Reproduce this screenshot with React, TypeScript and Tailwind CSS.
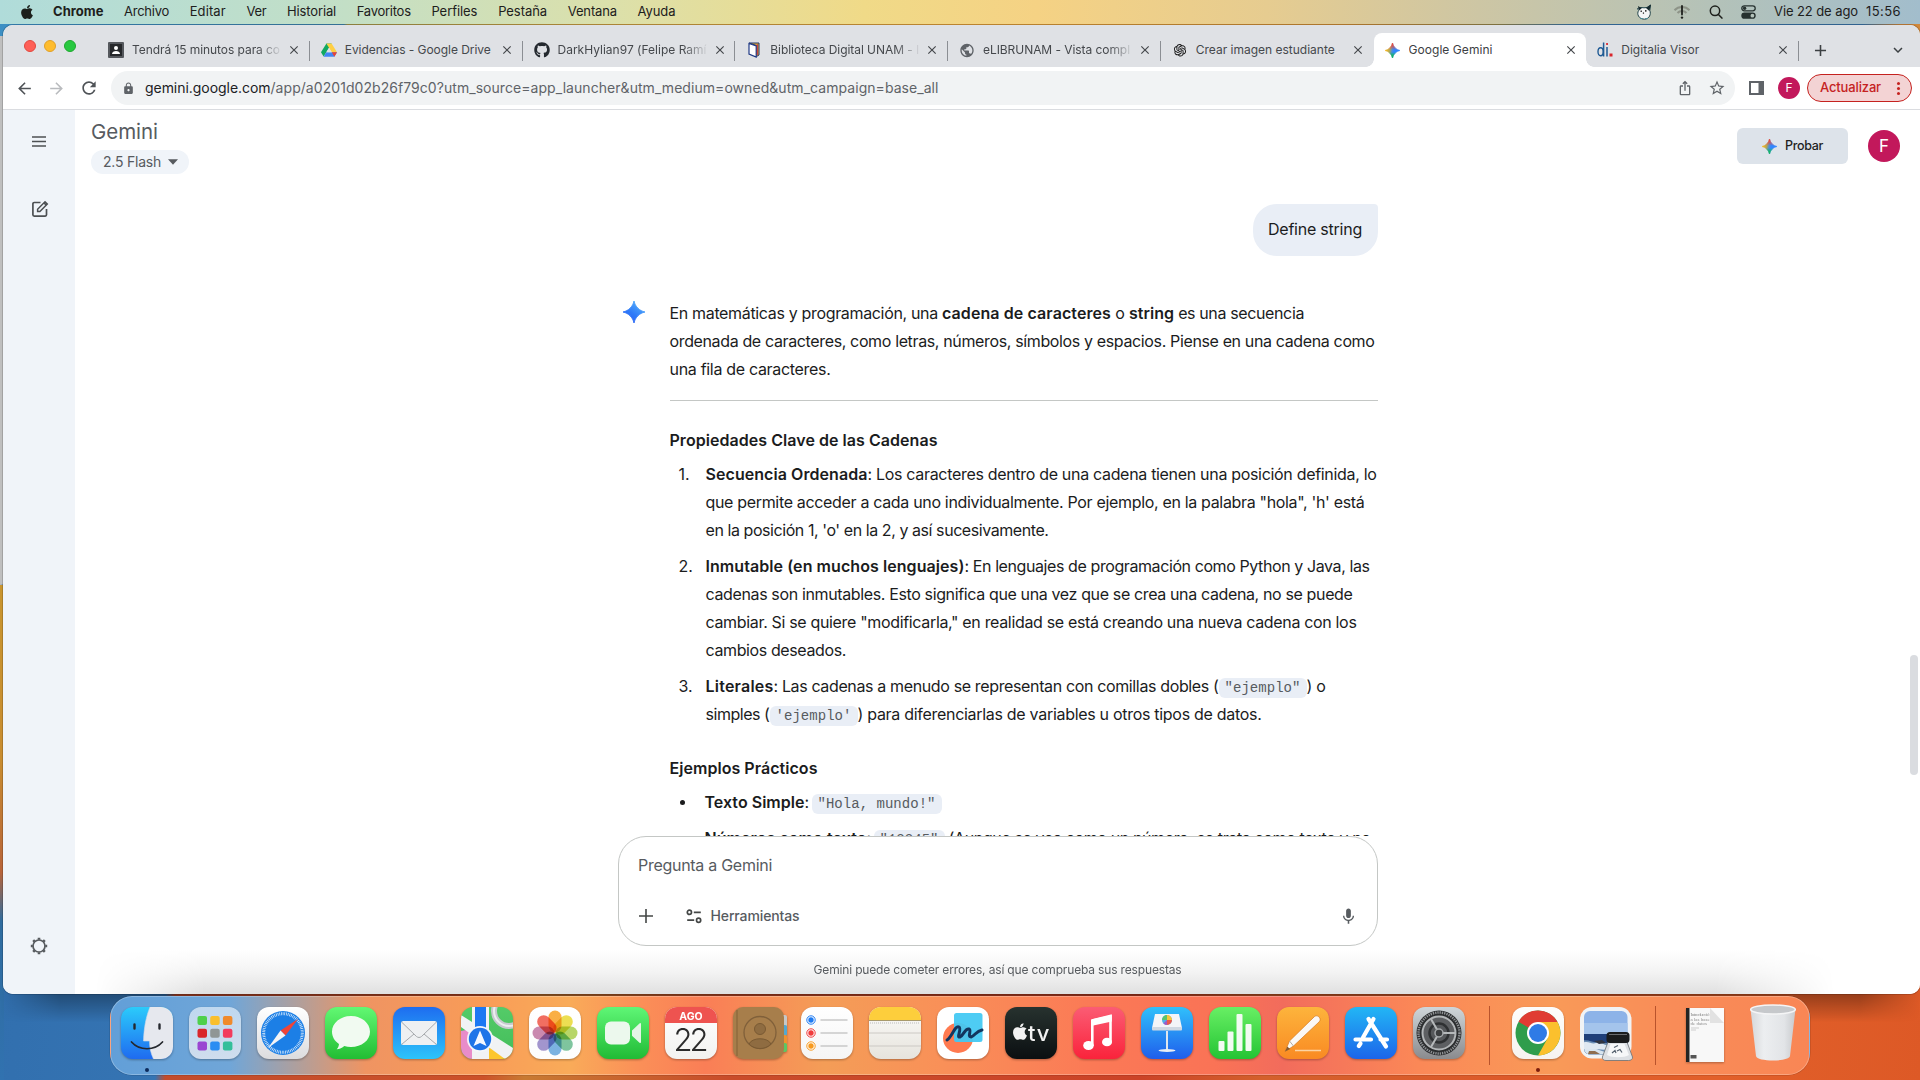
import React, { useLayoutEffect, useRef, useState } from "react";
import { FaApple, FaGithub } from "react-icons/fa";
import { AiOutlineOpenAI } from "react-icons/ai";
import {
  MdAdd, MdArrowBack, MdArrowForward, MdClose, MdIosShare, MdKeyboardArrowDown,
  MdLock, MdMic, MdPublic, MdRefresh, MdStarBorder,
} from "react-icons/md";

const UI = "font-['Inter',sans-serif]";

/** Single-line text whose tracking is tuned so that it fills `w` pixels. */
function Fit({ w, className = "", children }: { w: number; className?: string; children: string }) {
  const ref = useRef<HTMLSpanElement>(null);
  const [ls, setLs] = useState(0);
  useLayoutEffect(() => {
    const el = ref.current;
    if (!el) return;
    const natural = el.getBoundingClientRect().width;
    setLs((w - natural) / children.length);
  }, []);
  return (
    <span className={"block shrink-0 whitespace-pre " + className} style={{ width: w }}>
      <span ref={ref} className="inline-block" style={{ letterSpacing: ls }}>{children}</span>
    </span>
  );
}

function Spark({ size, blue = false }: { size: number; blue?: boolean }) {
  const d = "M12 0C13.2 6 18 10.8 24 12C18 13.2 13.2 18 12 24C10.8 18 6 13.2 0 12C6 10.8 10.8 6 12 0Z";
  const id = blue ? "sparkBlue" : "sparkMulti";
  return (
    <svg width={size} height={size} viewBox="0 0 24 24" className="shrink-0">
      <defs>
        <linearGradient id="sparkBlue" x1="0" y1="1" x2="0.7" y2="0">
          <stop offset="0" stopColor="#2a5bf5" /><stop offset="0.5" stopColor="#2f7bf8" /><stop offset="1" stopColor="#55b0fb" />
        </linearGradient>
        <linearGradient id="sparkMulti" x1="0" y1="0.4" x2="1" y2="0.6">
          <stop offset="0.05" stopColor="#f9b81c" /><stop offset="0.3" stopColor="#b9a94e" />
          <stop offset="0.47" stopColor="#4f8fd8" /><stop offset="0.6" stopColor="#3186ff" /><stop offset="1" stopColor="#3186ff" />
        </linearGradient>
        <linearGradient id="sparkRed" x1="0.5" y1="0" x2="0.5" y2="1">
          <stop offset="0.1" stopColor="#f04438" /><stop offset="0.45" stopColor="#f04438" stopOpacity="0" />
          <stop offset="0.6" stopColor="#14b85c" stopOpacity="0" /><stop offset="0.85" stopColor="#14b85c" />
        </linearGradient>
      </defs>
      <path d={d} fill={`url(#${id})`} stroke={`url(#${id})`} strokeWidth="1" />
      {!blue && <path d={d} fill="url(#sparkRed)" stroke="url(#sparkRed)" strokeWidth="1" />}
    </svg>
  );
}

/* ---------- menu bar ---------- */
const MENUS: [string, number][] = [
  ["Archivo", 45], ["Editar", 36], ["Ver", 20], ["Historial", 49], ["Favoritos", 54],
  ["Perfiles", 46], ["Pestaña", 49], ["Ventana", 49], ["Ayuda", 38],
];

function MenuBar() {
  return (
    <div className={"flex h-6 items-center bg-[linear-gradient(90deg,#b0dcda_0%,#c3dfc6_18%,#dce0aa_32%,#f0da88_45%,#f5d284_54%,#e6cc90_66%,#cdc6a4_77%,#b4c2b8_89%,#a2bdcc_100%)] pl-[19px] text-[13px] text-[#1d201c] " + UI}>
      <FaApple className="mr-[18px] -mt-px size-4" />
      <Fit w={50.5} className="font-bold">Chrome</Fit>
      <div className="flex gap-[20.7px] pl-[20.5px]">
        {MENUS.map(([t, w]) => <Fit key={t} w={w}>{t}</Fit>)}
      </div>
      <div className="ml-auto flex items-center">
        <svg width="16" height="16" viewBox="0 0 16 16" className="mr-[21px]">
          <path d="M1.5 4.5L5 3.5L8 3.8L11 3.5L14.5 1L13.8 6.5C15.3 10 13.5 15 8.5 15.2C2.5 15 .5 10 2.6 6.5Z" fill="#f4f6f5" stroke="#1f4248" strokeWidth="1" />
          <path d="M2 2L5.8 4.2L3 6.5ZM15 .5L10 4L13.3 7Z" fill="#172a2e" />
          <path d="M5.2 6.5v1.6M9.800 6v1.8M7 8.600l.8.9" stroke="#111" strokeWidth="1.2" />
          <path d="M4 14.6h3M9 14.6h3" stroke="#4e8f97" strokeWidth="1" />
        </svg>
        <svg width="18" height="16" viewBox="0 0 18 16" className="mr-[18px]">
          <path d="M1.5 6.2A10.5 10.5 0 0 1 16.5 6.2M4.5 9A6.3 6.3 0 0 1 13.5 9" fill="none" stroke="#8e9488" strokeWidth="2" />
          <path d="M9 2v8.5" stroke="#1d201c" strokeWidth="1.8" strokeLinecap="round" /><circle cx="9" cy="13.6" r="1.2" fill="#1d201c" />
        </svg>
        <svg width="14" height="14" viewBox="0 0 14 14" className="mr-[18px]" fill="none" stroke="#1d201c" strokeWidth="1.5" strokeLinecap="round">
          <circle cx="6" cy="5.8" r="4.7" /><path d="M9.4 9.4l3.5 3.7" />
        </svg>
        <svg width="15" height="14" viewBox="0 0 15 14" className="mr-[18px]">
          <rect x="0.8" y="0.8" width="13.4" height="5" rx="2.5" fill="none" stroke="#26312f" strokeWidth="1.3" /><circle cx="3.6" cy="3.3" r="1.7" fill="#26312f" />
          <rect x="0.3" y="7.6" width="14.4" height="6.2" rx="3.1" fill="#26312f" /><circle cx="11.4" cy="10.7" r="1.9" fill="#b3c2ba" />
        </svg>
        <Fit w={84}>Vie 22 de ago</Fit>
        <div className="w-2" />
        <Fit w={35}>15:56</Fit>
        <div className="w-[19px]" />
      </div>
    </div>
  );
}

/* ---------- tab strip ---------- */
const DriveIcon = () => (
  <svg width="16" height="16" viewBox="0 0 16 16">
    <path d="M5.4 1.5h5.2L5.2 10.6 2.6 14.6 0 10.3z" fill="#11a861" /><path d="M5.4 1.5h5.2L16 10.3h-5.2z" fill="#ffcf44" />
    <path d="M5.2 10.3H16l-2.6 4.4H2.6z" fill="#4285f4" /><path d="M10.8 10.3H16l-2.6 4.4z" fill="#ea4335" />
    <path d="M8 5.8l2.7 4.5H5.3z" fill="#dfe1e5" />
  </svg>
);
const SlideIcon = () => (
  <svg width="16" height="16" viewBox="0 0 16 16">
    <rect width="16" height="16" rx="1" fill="#55585d" /><rect x="2" y="2" width="12" height="12" fill="#26282b" />
    <circle cx="8" cy="6" r="2" fill="#fff" /><path d="M4 12c0-4 8-4 8 0z" fill="#fff" />
  </svg>
);
const BookIcon = () => (
  <svg width="12" height="16" viewBox="0 0 12 16">
    <path d="M1 1h10v12l-2.5 1.5V3.5z" fill="#e4b53c" stroke="#20356c" strokeWidth="1" /><path d="M8 3l2-1v10.5L8 14z" fill="#c8463a" />
    <path d="M1 1.5L8.2 4v11L1 12z" fill="#fff" stroke="#213a85" strokeWidth="1.2" />
  </svg>
);
const DiIcon = () => (
  <svg width="16" height="16" viewBox="0 0 16 16">
    <ellipse cx="3.600" cy="9.800" rx="2.600" ry="4" fill="none" stroke="#1f5a94" strokeWidth="1.4" />
    <path d="M6.600 .5v14" stroke="#1f5a94" strokeWidth="1.5" /><path d="M10 5v9.500" stroke="#1f5a94" strokeWidth="1.5" />
    <path d="M9.200 1h1.700v2H9.200z" fill="#d9252b" /><path d="M12.500 11.500h3v3h-3z" fill="#d9252b" />
  </svg>
);

type Tab = { t: string; w: number; icon: React.ReactNode; active?: boolean; fade?: boolean };
const TABS: Tab[] = [
  { t: "Tendrá 15 minutos para co", w: 148, icon: <SlideIcon />, fade: true },
  { t: "Evidencias - Google Drive", w: 146, icon: <DriveIcon /> },
  { t: "DarkHylian97 (Felipe Ramí", w: 149, icon: <FaGithub className="size-4 text-[#24292f]" />, fade: true },
  { t: "Biblioteca Digital UNAM - I", w: 149, icon: <BookIcon />, fade: true },
  { t: "eLIBRUNAM - Vista compl", w: 147, icon: <MdPublic className="size-[17px] text-[#5f6368]" />, fade: true },
  { t: "Crear imagen estudiante", w: 139, icon: <AiOutlineOpenAI className="size-4 text-[#1c1c1c]" /> },
  { t: "Google Gemini", w: 84, icon: <Spark size={15} />, active: true },
  { t: "Digitalia Visor", w: 78, icon: <DiIcon /> },
];

function TabStrip() {
  return (
    <div className={"flex h-[42px] bg-[#dfe1e5] text-[12px] text-[#45484c] " + UI}>
      <div className="flex w-[94px] shrink-0 gap-2 pt-[15px] pl-[21px]">
        <span className="size-3 rounded-full border border-[#e1483f] bg-[#fe5f57]" />
        <span className="size-3 rounded-full border border-[#e0a028] bg-[#febc2e]" />
        <span className="size-3 rounded-full border border-[#1fa82f] bg-[#28c840]" />
      </div>
      {TABS.map((tab, i) => (
        <div key={tab.t} className={"relative mt-2 flex h-[34px] w-[212.75px] shrink-0 items-center rounded-t-lg " + (tab.active ? "bg-white text-[#3c4043]" : "")}>
          {tab.active && (
            <>
              <span className="absolute bottom-0 -left-2 size-2 bg-[radial-gradient(circle_at_0_0,transparent_7.5px,white_8px)]" />
              <span className="absolute -right-2 bottom-0 size-2 bg-[radial-gradient(circle_at_100%_0,transparent_7.5px,white_8px)]" />
            </>
          )}
          <span className="flex w-[35px] shrink-0 justify-end pr-[8px]"><span className="flex w-4 justify-center">{tab.icon}</span></span>
          <span className="flex w-[149px] shrink-0 overflow-hidden">
            <span className={tab.fade ? "[mask-image:linear-gradient(90deg,black_125px,transparent_151px)]" : ""}><Fit w={tab.w}>{tab.t}</Fit></span>
          </span>
          <span className="flex w-[26px] shrink-0 justify-center"><MdClose className="size-[14px] text-[#45484c]" /></span>
          {i !== 5 && i !== 6 && <span className="absolute top-2 right-0 h-5 w-px bg-[#8b8e93]" />}
        </div>
      ))}
      <span className="flex w-[42px] items-center justify-center pt-2"><MdAdd className="size-[19px] text-[#3c4043]" /></span>
      <span className="mr-[13px] ml-auto flex items-center pt-2"><MdKeyboardArrowDown className="size-[18px] text-[#3c4043]" /></span>
    </div>
  );
}

function Toolbar() {
  return (
    <div className={"flex h-[43px] items-center border-b border-[#dadce0] bg-white text-[14px] " + UI}>
      <MdArrowBack className="ml-[12px] size-[19px] text-[#4f5357]" />
      <MdArrowForward className="ml-[13px] size-[19px] text-[#b9bbbe]" />
      <MdRefresh className="ml-[13px] size-[20px] text-[#4f5357]" />
      <div className="ml-[12px] flex h-[34px] w-[1624px] items-center rounded-full bg-[#f1f3f4] pl-[11px]">
        <MdLock className="mr-[10px] size-[13px] text-[#5f6368]" />
        <Fit w={125.5} className="-mt-px text-[#202124]">gemini.google.com</Fit>
        <Fit w={668} className="-mt-px text-[#5f6368]">/app/a0201d02b26f79c0?utm_source=app_launcher&utm_medium=owned&utm_campaign=base_all</Fit>
        <MdIosShare className="ml-auto size-[16px] text-[#5f6368]" />
        <MdStarBorder className="mr-[9px] ml-[15px] size-[18px] text-[#5f6368]" />
      </div>
      <svg width="15" height="14" viewBox="0 0 15 14" className="ml-[14px]"><path d="M0 0h15v14H0zM2 2v10h7.5V2z" fill="#5f6368" fillRule="evenodd" /></svg>
      <span className="ml-[14px] flex size-[22px] items-center justify-center rounded-full bg-[#c2185b] text-[12px] text-white">F</span>
      <div className="ml-[7px] flex h-7 w-[105px] items-center rounded-full border border-[#c5221f] bg-[#f3d3d4] pl-[12px] text-[13px] font-medium text-[#c5221f]">
        <Fit w={61}>Actualizar</Fit>
        <span className="ml-[16px] flex flex-col gap-[2px]">
          <i className="size-[3px] rounded-full bg-[#c5221f]" /><i className="size-[3px] rounded-full bg-[#c5221f]" /><i className="size-[3px] rounded-full bg-[#c5221f]" />
        </span>
      </div>
    </div>
  );
}

/* ---------- conversation ---------- */
type Seg = [kind: "n" | "b" | "c" | "g", text: string, w: number];

function Line({ segs }: { segs: Seg[] }) {
  return (
    <div className="flex h-7 items-center">
      {segs.map(([k, t, w], i) => {
        if (k === "g") return <span key={i} style={{ width: w }} />;
        if (k === "c")
          return (
            <span key={i} className="mt-1 flex h-5 shrink-0 items-center justify-center rounded-md bg-[#e9eef6] font-['Liberation_Mono',monospace] text-[14px] text-[#575b5f]" style={{ width: w }}>
              <Fit w={w - 12}>{t}</Fit>
            </span>
          );
        return <Fit key={i} w={w} className={k === "b" ? "font-semibold" : ""}>{t}</Fit>;
      })}
    </div>
  );
}

function Item({ mark, lines }: { mark: string; lines: Seg[][] }) {
  return (
    <li className="flex">
      <span className={"shrink-0 pl-[9px] leading-7 " + (mark === "•" ? "w-[35px]" : "w-[36px]")}>
        {mark === "•" ? <span className="mt-[12px] ml-px block size-[5px] rounded-full bg-[#1b1c1d]" /> : mark}
      </span>
      <div>{lines.map((l, i) => <Line key={i} segs={l} />)}</div>
    </li>
  );
}

function Conversation() {
  return (
    <div className="h-[654px] overflow-hidden">
      <div className={"mx-auto w-[760px] text-[16px] text-[#1b1c1d] " + UI}>
        <div className="mt-[22px] ml-auto flex h-[52px] w-[125px] items-center rounded-[24px] rounded-tr-[4px] bg-[#e9eef6] pb-[2px] pl-[15.5px]">
          <Fit w={94}>Define string</Fit>
        </div>
        <div className="mt-[43px] flex">
          <div className="w-[52px] pt-[2px] pl-[5px]"><Spark size={22} blue /></div>
          <div className="w-[708px]">
            <Line segs={[["n", "En matemáticas y programación, una ", 272.5], ["b", "cadena de caracteres", 169], ["n", " o ", 18], ["b", "string", 45], ["n", " es una secuencia", 130]]} />
            <Line segs={[["n", "ordenada de caracteres, como letras, números, símbolos y espacios. Piense en una cadena como", 705]]} />
            <Line segs={[["n", "una fila de caracteres.", 161]]} />
            <div className="mt-[17px] h-px bg-[#c4c7c5]" />
            <div className="mt-[25px]"><Line segs={[["b", "Propiedades Clave de las Cadenas", 268]]} /></div>
            <ol className="mt-[6px] flex flex-col gap-2">
              <Item mark="1." lines={[
                [["b", "Secuencia Ordenada", 162], ["n", ": Los caracteres dentro de una cadena tienen una posición definida, lo", 509]],
                [["n", "que permite acceder a cada uno individualmente. Por ejemplo, en la palabra \"hola\", 'h' está", 659]],
                [["n", "en la posición 1, 'o' en la 2, y así sucesivamente.", 343]],
              ]} />
              <Item mark="2." lines={[
                [["b", "Inmutable (en muchos lenguajes)", 259], ["n", ": En lenguajes de programación como Python y Java, las", 405]],
                [["n", "cadenas son inmutables. Esto significa que una vez que se crea una cadena, no se puede", 647]],
                [["n", "cambiar. Si se quiere \"modificarla,\" en realidad se está creando una nueva cadena con los", 651]],
                [["n", "cambios deseados.", 140.5]],
              ]} />
              <Item mark="3." lines={[
                [["b", "Literales", 68], ["n", ": Las cadenas a menudo se representan con comillas dobles (", 445], ["c", "\"ejemplo\"", 88], ["n", ") o", 19]],
                [["n", "simples (", 64], ["c", "'ejemplo'", 88], ["n", ") para diferenciarlas de variables u otros tipos de datos.", 404]],
              ]} />
            </ol>
            <div className="mt-[26px]"><Line segs={[["b", "Ejemplos Prácticos", 148]]} /></div>
            <ul className="mt-[6px] flex flex-col gap-2">
              <Item mark="•" lines={[[["b", "Texto Simple", 100], ["n", ":", 4], ["g", "", 3], ["c", "\"Hola, mundo!\"", 130]]]} />
              <Item mark="•" lines={[[["b", "Números como texto", 162], ["n", ":", 4], ["g", "", 3], ["c", "\"12345\"", 71], ["n", " (Aunque se vea como un número, se trata como texto y no", 426]]]} />
            </ul>
          </div>
        </div>
      </div>
    </div>
  );
}

function Gemini() {
  return (
    <div className="flex h-[884px]">
      <aside className="flex w-[72px] shrink-0 flex-col items-center bg-[#f0f4f9]">
        <svg width="14" height="12" viewBox="0 0 14 12" className="mt-[26px] mb-[52px]"><path d="M0 1h14M0 5.5h14M0 10h14" stroke="#4d5053" strokeWidth="1.7" /></svg>
        <svg width="18" height="18" viewBox="0 0 18 18" fill="none" stroke="#4d5053" strokeWidth="1.7" className="ml-px">
          <path d="M9.5 2.5H3.2a1.3 1.3 0 0 0-1.3 1.3v11a1.3 1.3 0 0 0 1.3 1.3h11a1.3 1.3 0 0 0 1.3-1.3V9" />
          <path d="M6.6 11.5V9.2L14 1.8l2.3 2.3-7.4 7.4z" strokeWidth="1.5" /><path d="M13 2.8L15.2 5" />
        </svg>
        <svg width="18" height="18" viewBox="0 0 18 18" className="mt-auto mb-[39px]" fill="none" stroke="#575b5f">
          <circle cx="9" cy="9" r="6" strokeWidth="1.7" />
          <g strokeWidth="2.6">{[0, 45, 90, 135, 180, 225, 270, 315].map((a) => <path key={a} d="M9 .8v2" transform={`rotate(${a} 9 9)`} />)}</g>
        </svg>
      </aside>
      <main className={"flex min-w-0 flex-1 flex-col bg-white " + UI}>
        <header className="flex h-[72px] shrink-0 items-start text-[#575b5f]">
          <div className="ml-[16px]">
            <Fit w={67} className="mt-[8px] h-[26px] text-[20.5px] leading-[27px]">Gemini</Fit>
            <div className="mt-[6px] flex h-6 w-[98px] items-center rounded-full bg-[#f0f4f9] pb-px pl-[12px] text-[14px]">
              <Fit w={58}>2.5 Flash</Fit>
              <svg width="10" height="6" viewBox="0 0 10 6" className="ml-[7px]"><path d="M0 .3h10L5 5.8z" fill="#575b5f" /></svg>
            </div>
          </div>
          <div className="mt-[18px] mr-[20px] ml-auto flex items-center">
            <div className="mr-[20px] flex h-9 w-[111px] items-center rounded-md bg-[#dde3ea] pt-px pl-[25px] text-[12.5px] font-medium text-[#1f1f1f]">
              <Spark size={15} /><span className="w-[8px]" /><Fit w={38}>Probar</Fit>
            </div>
            <span className="flex size-8 items-center justify-center rounded-full bg-[#c2185b] pt-px text-[17px] text-white">F</span>
          </div>
        </header>
        <Conversation />
        <div className="mx-auto flex h-[110px] w-[760px] shrink-0 flex-col rounded-[28px] border border-[#c4c7c5] bg-white px-[19px] text-[#575b5f]">
          <Fit w={134} className="mt-[16px] ml-[0.5px] text-[16px] leading-6">Pregunta a Gemini</Fit>
          <div className="mt-[27px] flex h-6 items-center text-[14px] font-medium">
            <svg width="16" height="16" viewBox="0 0 16 16" className="ml-[0.5px]"><path d="M8 1v14M1 8h14" stroke="#444746" strokeWidth="1.6" /></svg>
            <svg width="16" height="16" viewBox="0 0 16 16" className="mr-[8.5px] ml-[32px]" fill="none" stroke="#444746" strokeWidth="1.7">
              <circle cx="3.4" cy="4.3" r="2.1" /><circle cx="12.6" cy="12.2" r="2.1" /><path d="M7.8 4.3h7M1.2 12.2h7" />
            </svg>
            <Fit w={89} className="-mt-px">Herramientas</Fit>
            <MdMic className="ml-auto size-[19px]" />
          </div>
        </div>
        <div className="flex flex-1 items-center justify-center bg-[linear-gradient(180deg,white_8%,#f3f3f3_55%,#e0e0e0_100%)] text-[12px] text-[#575b5f] [mask-image:linear-gradient(90deg,transparent_20px,black_130px,black_1640px,transparent_1760px)]">
          <Fit w={368}>Gemini puede cometer errores, así que comprueba sus respuestas</Fit>
        </div>
      </main>
    </div>
  );
}

/* ---------- dock ---------- */
const grad = (id: string, a: string, b: string) => (
  <linearGradient id={id} x1="0" y1="0" x2="0" y2="1"><stop offset="0" stopColor={a} /><stop offset="1" stopColor={b} /></linearGradient>
);
const Tile = ({ id, a, b, children }: { id: string; a: string; b: string; children?: React.ReactNode }) => (
  <svg width="52" height="52" viewBox="0 0 52 52" className="shrink-0 drop-shadow-[0_1px_1px_rgba(0,0,0,0.3)]">
    <defs>{grad(id, a, b)}<clipPath id={id + "c"}><rect width="52" height="52" rx="12" /></clipPath></defs>
    <g clipPath={`url(#${id}c)`}><rect width="52" height="52" fill={`url(#${id})`} />{children}</g>
  </svg>
);

const PETALS = ["#f99d1c", "#e9d82c", "#a8cf45", "#62b98a", "#5fa4dc", "#8f7fc4", "#c0709f", "#f04e3e"];
const LAUNCH = ["#4fd04b", "#f9bf2d", "#f08a2b", "#d9262a", "#8f9696", "#f23c5d", "#9a45d1", "#2a8df2", "#33bf9a"];

const APPS: React.ReactNode[] = [
  <Tile id="fin" a="#2bcbfb" b="#1f6bf0">
    <path d="M29 0C25 10 23 20 22.5 34h6c0 6 1 12 4 18H52V0z" fill="#e6e8ee" />
    <path d="M29 0C25 10 23 20 22.5 34h6c0 6 1 12 4 18" fill="none" stroke="#cfd9e6" strokeWidth=".6" />
    <path d="M13.5 17.500v4M38.5 17.500v4" stroke="#25282e" strokeWidth="2.4" strokeLinecap="round" />
    <path d="M10.5 35c8 9 23 9 31 0" stroke="#25282e" strokeWidth="1.7" fill="none" strokeLinecap="round" />
  </Tile>,
  <Tile id="lau" a="#bfd8ef" b="#cfdded">
    {LAUNCH.map((c, i) => <rect key={i} x={8.5 + (i % 3) * 12.7} y={9 + Math.floor(i / 3) * 12.7} width="9.5" height="9" rx="2" fill={c} />)}
  </Tile>,
  <Tile id="saf" a="#ffffff" b="#dcdcde">
    <circle cx="26" cy="26" r="22" fill="#1c7fe6" /><circle cx="26" cy="26" r="19.3" fill="none" stroke="#e8f3fd" strokeWidth="3" strokeDasharray=".7 1" />
    <path d="M41 12L28.5 28.5 23.5 23.5z" fill="#f04437" /><path d="M11 41L23.5 23.5 28.5 28.5z" fill="#f3f4f6" />
  </Tile>,
  <Tile id="mes" a="#62f873" b="#22bd33">
    <path d="M26 9C15.5 9 7 16 7 24.7c0 5 2.7 9.3 7 12.2-.2 2.3-1 4-2.3 5.3 3-.2 5.6-1.3 7.600-3.2 2 .6 4.300.9 6.700.9 10.600 0 19-6.500 19-15.200S36.500 9 26 9z" fill="#f1faf1" />
  </Tile>,
  <Tile id="mai" a="#1e6df0" b="#2cc4fa">
    <rect x="8" y="14" width="36" height="24" rx="2.5" fill="#eef0f2" /><path d="M8.5 15l15 14.5c1.5 1.3 3.5 1.3 5 0L43.5 15M8.5 37.5L21 27M43.5 37.5L31 27" fill="none" stroke="#a5a8ac" strokeWidth="1" />
  </Tile>,
  <Tile id="map" a="#54cb68" b="#43bd5a">
    <path d="M0 24L10 22 28 52H0z" fill="#e88cc9" /><path d="M28 36L52 52H28z" fill="#fdc62e" /><path d="M0 8L52 41V52L44 52 0 20z" fill="#f1f2f4" />
    <path d="M11 0h17v52H11z" fill="#f1f2f4" /><path d="M14 0h11v24H14z" fill="#1b78f3" />
    <circle cx="48" cy="4" r="15" fill="none" stroke="#c7cad0" strokeWidth="6" /><circle cx="48" cy="4" r="15" fill="none" stroke="#eceef0" strokeWidth="2" />
    <circle cx="19" cy="32" r="13" fill="#f4f6f9" /><circle cx="19" cy="32" r="11.2" fill="#1f74e8" /><path d="M19 23.5L25.5 39 19 36 12.5 39z" fill="#f5f8ff" />
  </Tile>,
  <Tile id="pho" a="#ffffff" b="#fdfdfd">
    {PETALS.map((c, i) => <rect key={c} x="19.5" y="3.5" width="13" height="22" rx="6.5" fill={c} opacity=".82" transform={`rotate(${i * 45} 26 26)`} className="mix-blend-multiply" />)}
  </Tile>,
  <Tile id="fac" a="#5ff676" b="#20bb35">
    <rect x="8" y="14.5" width="25" height="23" rx="6" fill="#ecf8ed" /><path d="M35 23.5l7.5-7c.8-.7 1.5-.4 1.5.6v18c0 1-.7 1.3-1.5.6l-7.5-7z" fill="#e4f5e6" />
  </Tile>,
  <Tile id="cal" a="#ffffff" b="#f2f2f0">
    <rect width="52" height="16" fill="#ee5350" />
    <text x="26" y="12.5" textAnchor="middle" fontSize="10.5" fontWeight="700" fill="#fff" fontFamily="Inter">AGO</text>
    <text x="26" y="43.5" textAnchor="middle" fontSize="31" fontWeight="300" fill="#2b2b2b" fontFamily="Inter" textLength="35">22</text>
  </Tile>,
  <svg width="54" height="52" viewBox="0 0 54 52" className="-mr-0.5 shrink-0 drop-shadow-[0_1px_1px_rgba(0,0,0,0.3)]">
    <rect x="46" y="8" width="8" height="12" rx="2" fill="#c6c8c8" /><rect x="46" y="18" width="8" height="11" rx="2" fill="#54a8cf" /><rect x="46" y="28" width="8" height="10" rx="2" fill="#f1912d" /><rect x="46" y="36" width="8" height="9" rx="2" fill="#5cc763" />
    <rect width="51" height="52" rx="10" fill="#a77e4b" /><path d="M4 3v46" stroke="#8c683c" strokeWidth="1.3" />
    <circle cx="27" cy="25.5" r="16" fill="none" stroke="#80603a" strokeWidth="1.3" /><circle cx="27" cy="22" r="5.5" fill="#8f6c41" stroke="#7a5a33" /><path d="M16 37c3-7 19-7 22 0-6 6-16 6-22 0z" fill="#8f6c41" stroke="#7a5a33" />
  </svg>,
  <Tile id="rem" a="#ffffff" b="#f5f5f5">
    {["#1f7bf2", "#f03b3b", "#f79a1f"].map((c, i) => (
      <g key={c}><circle cx="10" cy={13 + i * 13} r="4.2" fill="#fff" stroke={c} strokeWidth="1" /><circle cx="10" cy={13 + i * 13} r="2.7" fill={c} /><path d={`M19.5 ${13 + i * 13}H46.5`} stroke="#c8c8c8" strokeWidth="1.5" /></g>
    ))}
  </Tile>,
  <Tile id="not" a="#fcfcfa" b="#e6e3dc">
    <rect width="52" height="13" fill="#fdce3c" /><path d="M0 13.5h52" stroke="#a89a6c" strokeWidth="1" /><path d="M1 16h50" stroke="#bbb" strokeWidth="1" strokeDasharray="1 1" />
    <path d="M0 26h52M0 39h52" stroke="#ccc9c4" strokeWidth="1" />
  </Tile>,
  <Tile id="fre" a="#ffffff" b="#ffffff">
    <circle cx="21" cy="31" r="15" fill="#ff7a50" /><rect x="17" y="6" width="28.5" height="29" rx="2.5" fill="#43c9f3" opacity=".94" />
    <path d="M10 33c5-3 8-15 12-13 3 2-3 11 1 10 4-2 5-9 9-8 3 1-2 8 2 8 4-1 5-6 11-7" fill="none" stroke="#12365f" strokeWidth="3" strokeLinecap="round" />
  </Tile>,
  <Tile id="tvv" a="#27322f" b="#0b0f11">
    <g transform="translate(5.5 15) scale(.95)"><FaApple size={20} color="#f2f2f2" /></g>
    <text x="23" y="34" fontSize="22" fontWeight="500" fill="#f2f2f2" fontFamily="Inter" textLength="21.5">tv</text>
  </Tile>,
  <Tile id="mus" a="#fb5c74" b="#fa233b">
    <path d="M19 13.5L37.5 9v26.5" fill="none" stroke="#fff" strokeWidth="2.6" /><path d="M18 12.5L38.8 8v6.5L18 19z" fill="#fff" /><path d="M19.3 14v25" stroke="#fff" strokeWidth="2.6" />
    <ellipse cx="15.5" cy="38.5" rx="5.3" ry="4.5" fill="#fff" /><ellipse cx="34" cy="35" rx="5" ry="4.3" fill="#fff" />
  </Tile>,
  <Tile id="key" a="#30c0fb" b="#1f5eec">
    <path d="M26 24v19" stroke="#dfe6ee" strokeWidth="2" /><ellipse cx="26" cy="43.5" rx="8.5" ry="1.5" fill="#e9eef4" />
    <path d="M14 7h24l3 14H11z" fill="#f3f5f8" /><rect x="11" y="20" width="30" height="3.5" rx="1" fill="#cfd8e2" />
    <circle cx="26" cy="13" r="5" fill="#51b1e8" /><path d="M26 13V8a5 5 0 0 1 5 5z" fill="#f8c53a" /><path d="M26 13h5a5 5 0 0 1-5 5z" fill="#ea5a4b" /><path d="M26 13v5a5 5 0 0 1-3.600-1.500z" fill="#a05bc4" /><path d="M26 13h-5a5 5 0 0 1 5-5z" fill="#5bc56c" />
  </Tile>,
  <Tile id="num" a="#68ef64" b="#24c434">
    {[[9.5, 34, 10], [18.5, 24.5, 19.5], [27.5, 7, 37], [36.5, 17, 27]].map(([x, y, h]) => <rect key={x} x={x} y={y} width="6" height={h} rx="1" fill="#f2fbf2" />)}
  </Tile>,
  <Tile id="pag" a="#fdb43c" b="#f98a22">
    <path d="M18 43.5h26" stroke="#fcd4a4" strokeWidth="1.5" /><path d="M8 44.5L12.5 34 37 10c2-2 4-1 5 0s2 3 0 5L16.5 39z" fill="#fbf8f5" stroke="#d5791c" strokeWidth=".7" /><path d="M8 44.5l2.2-5 3 2.5z" fill="#8b5a2b" /><path d="M12.5 34l4 5" stroke="#b2aba4" strokeWidth="1" />
  </Tile>,
  <Tile id="sto" a="#22b6f5" b="#1c65ea">
    <g stroke="#fff" strokeWidth="4.2" strokeLinecap="round"><path d="M28.5 12L18 30.5M23.5 12L41 39.5M10.5 32.5H26M35.5 32.5H42M15.5 36.5L13.8 39" /></g>
  </Tile>,
  <Tile id="set" a="#cfd6da" b="#8a8b8e">
    <circle cx="26" cy="26" r="22.5" fill="#2b2d2f" /><circle cx="26" cy="26" r="20.5" fill="none" stroke="#8f9295" strokeWidth="2.5" strokeDasharray="1.3 1" />
    <circle cx="26" cy="26" r="16.5" fill="#5d5f62" stroke="#b3b6b8" strokeWidth="2" /><circle cx="26" cy="26" r="9.5" fill="#56585b" stroke="#2f3133" strokeWidth="2.5" />
    <g stroke="#b5b8ba" strokeWidth="2"><path d="M26 26h16M26 26L18 12M26 26L18 40" /></g><circle cx="26" cy="26" r="4" fill="#3c3e40" stroke="#a5a8aa" strokeWidth="1.5" />
  </Tile>,
];

const ChromeIcon = () => (
  <Tile id="chr" a="#fdfdfc" b="#f6f3f0">
    <circle cx="26" cy="26" r="22.5" fill="#2f9d4c" />
    <path d="M26 26L6.5 14.8A22.5 22.5 0 0 1 45.5 15H26z" fill="#e03c33" />
    <path d="M26 15H45.5A22.5 22.5 0 0 1 26 48.500L35.500 31.500z" fill="#fbc02d" />
    <circle cx="26" cy="26" r="11" fill="#fff" /><circle cx="26" cy="26" r="9" fill="#2f7be6" />
  </Tile>
);
const PreviewIcon = () => (
  <svg width="56" height="57" viewBox="0 0 56 57" className="mt-1 -mr-1 shrink-0">
    <rect x="0" y="2" width="51.5" height="51.5" rx="12" fill="#f1f3f5" /><clipPath id="pv"><rect x="4" y="6" width="43.5" height="43.5" rx="6" /></clipPath>
    <g clipPath="url(#pv)"><rect width="56" height="56" fill="#8db3e8" /><rect y="18" width="56" height="14" fill="#a4c4ec" /><rect y="29" width="56" height="30" fill="#1f3f7a" />
      <path d="M0 36c8-3 14 3 22 1l8 2v12H0z" fill="#6d8fb4" /><path d="M2 38c7-3 9 2 14 0s8 3 12 2v4c-6 2-8-1-13 1s-9-1-13 0z" fill="#dfe8f1" /><path d="M14 36l8-1 4 3-7 1z" fill="#2f3440" /><path d="M4 45l12-1 9 3v3H4z" fill="#d8e4ee" /><path d="M9 46l6 0 5 3H8z" fill="#8f6e50" /></g>
    <path d="M28 37h19l5.500 15c.4 2.500-2 3.500-4 3.500H26c-2 0-4-1-3.600-3.500z" fill="#dcdfe3" stroke="#6a6e72" strokeWidth=".8" /><path d="M30.500 39h14l4.500 11c-5 3-17 3-22 0z" fill="#f6f7f8" />
    <path d="M34 42.500l4-2M32 48l3-2.500 1 2.500M37 46l3-1.500 2 3" stroke="#55616e" strokeWidth="1.200" fill="none" />
    <rect x="26.5" y="27" width="23" height="11" rx="3.5" fill="#1b1c1d" /><path d="M29 29.500h18" stroke="#6b6d70" strokeWidth="1" />
  </svg>
);
const DocIcon = () => (
  <svg width="38" height="56" viewBox="0 0 38 56" className="mt-1 shrink-0 drop-shadow-[0_1px_1px_rgba(0,0,0,0.3)]">
    <path d="M0 1h24l14 14v40H0z" fill="#f8f8f8" /><rect y="1" width="3.500" height="54" fill="#232323" />
    <g fontFamily="Liberation Serif" fontSize="5" fill="#8c8c8c"><text x="4.500" y="9" textLength="19">Introducció</text><text x="4.500" y="13.500">a las bases</text><text x="4.500" y="18">de datos</text></g>
    <path d="M24 1h14v15L24 16z" fill="#fbfbfb" /><path d="M24 1v15h14z" fill="#e2e2e2" />
    <path d="M5 21h8M5 23h5" stroke="#bbb" strokeWidth=".7" /><rect x="4.500" y="48" width="6" height="3.500" fill="#555" />
  </svg>
);
const TrashIcon = () => (
  <svg width="46" height="58" viewBox="0 0 46 58" className="mt-0.5 shrink-0">
    <defs><linearGradient id="tr"><stop offset="0" stopColor="#d5d7da" /><stop offset=".3" stopColor="#eceef0" /><stop offset=".75" stopColor="#e2e4e7" /><stop offset="1" stopColor="#c8cacd" /></linearGradient></defs>
    <path d="M.5 5L6 52c.5 6 33.500 6 34 0L45.500 5z" fill="url(#tr)" /><ellipse cx="23" cy="5.500" rx="22.300" ry="4.500" fill="#c6c8cb" stroke="#f5f5f6" strokeWidth="1.500" />
  </svg>
);

function Dock() {
  return (
    <div className="absolute top-[996px] left-[110px] flex h-[79px] w-[1700px] items-start rounded-[22px] border border-[#ffffff40] bg-[linear-gradient(90deg,#629fd8_0%,#70a6d8_7%,#b09f9c_11%,#ef9462_15%,#f99c57_22%,#f9ab59_27%,#fb9058_31%,#fa7e56_35%,#f49d57_42%,#f99058_49%,#fb7956_58%,#fa7356_65%,#f26c5c_69%,#fb8857_77%,#f99a58_85%,#f98c58_92%,#f98655_100%)] pt-[10px] shadow-[0_0_0_0.5px_rgba(0,0,0,0.2)]">
      <div className="flex gap-4 pl-[10px]">
        {APPS.map((a, i) => (
          <div key={i} className="flex w-[52px] flex-col items-center">
            {a}
            {i === 0 && <i className="mt-[9px] size-1 rounded-full bg-[#0d2b5c]" />}
          </div>
        ))}
      </div>
      <span className="ml-[24px] h-[59px] w-px -translate-y-px bg-[#b9532c]" />
      <div className="ml-[22px] flex w-[52px] flex-col items-center"><ChromeIcon /><i className="mt-[9px] size-1 rounded-full bg-[#7c1d0c]" /></div>
      <div className="-mt-[6px] ml-[16px] w-[54px]"><PreviewIcon /></div>
      <span className="ml-[21px] h-[59px] w-px -translate-y-px bg-[#b9532c]" />
      <div className="-mt-[4px] ml-[30px]"><DocIcon /></div>
      <div className="-mt-[5px] ml-[26px]"><TrashIcon /></div>
    </div>
  );
}

export default function App() {
  return (
    <div className="relative h-[1080px] w-[1920px] overflow-hidden bg-[linear-gradient(97deg,#2f6cab_0%,#3574b3_14%,#c24c2c_14.5%,#cc5129_30%,#c87a32_32%,#c94c2a_42%,#cb4327_62%,#d4602c_68%,#dd5a2a_80%,#e2602a_90%,#dd5926_100%)]">
      <div className="absolute top-6 left-0 h-[561px] w-2 rounded-br-lg bg-[#bfbfbf]" />
      <div className="absolute top-[585px] left-0 h-[495px] w-1 bg-[linear-gradient(180deg,#c9952f_0%,#c98d30_35%,#b8643a_58%,#2f6c9f_68%,#3172b0_100%)]" />
      <div className="absolute top-6 left-0 h-3 w-full bg-[linear-gradient(90deg,#3d8fc4_0%,#3f84ae_17.9%,#a4964a_18.1%,#c79d42_30%,#dd9c38_50%,#cb8a35_70%,#94854c_78%,#3a76ac_82%,#3a74a8_97%,#d0883c_99%)]" />
      <div className="absolute top-[990px] left-0 h-8 w-full bg-[linear-gradient(180deg,rgba(0,0,0,0.38),transparent)] [mask-image:linear-gradient(90deg,transparent,black_60px,black_1860px,transparent)]" />
      <div className="relative">
        <MenuBar />
        <div className="mt-px ml-[3px] h-[969px] w-[1917px] overflow-hidden rounded-[10px] bg-white shadow-[0_0_0_1px_rgba(0,0,0,0.15)]">
          <TabStrip />
          <Toolbar />
          <Gemini />
        </div>
      </div>
      <div className="absolute top-[655px] left-[1910px] h-[120px] w-[8px] rounded-full bg-[#dadce0]" />
      <Dock />
    </div>
  );
}
